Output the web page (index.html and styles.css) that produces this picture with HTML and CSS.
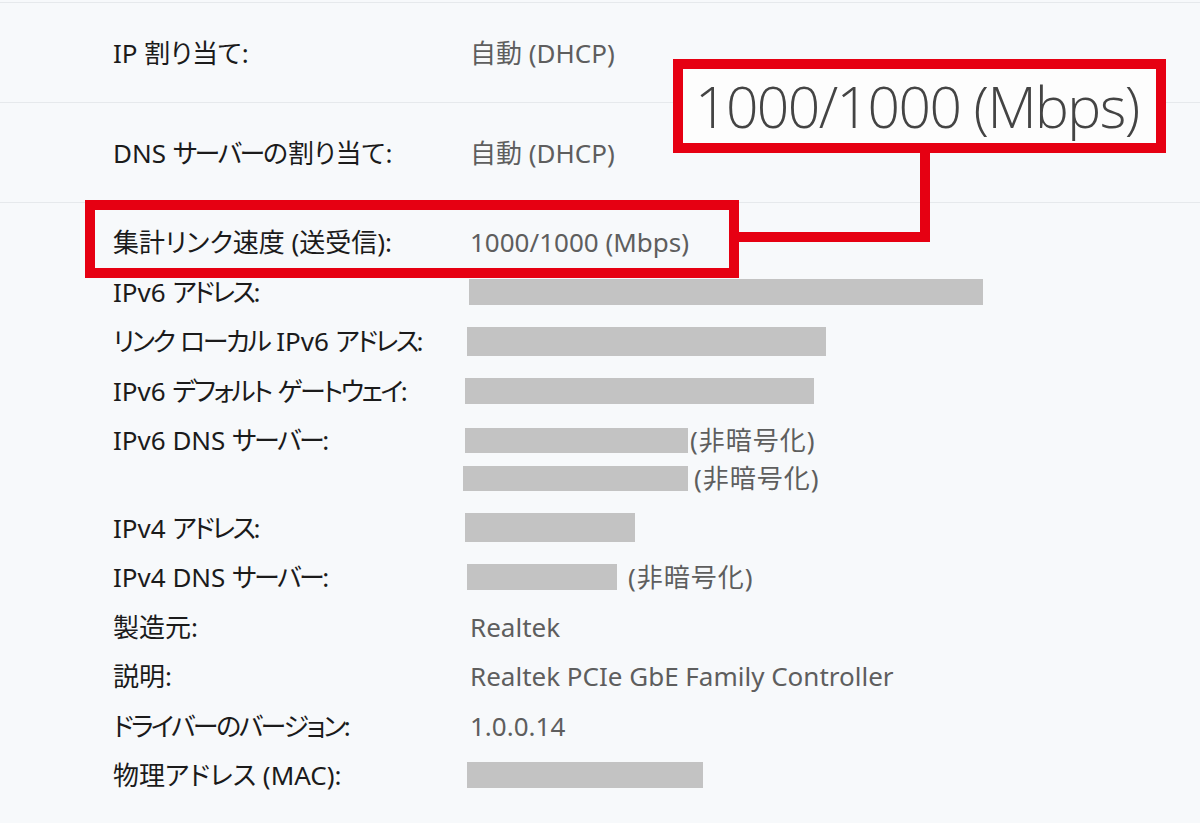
FILE: index.html
```html
<!DOCTYPE html>
<html lang="ja">
<head>
<meta charset="utf-8">
<title>ネットワークのプロパティ</title>
<link rel="stylesheet" href="styles.css">
</head>
<body>
<div class="page">
  <section class="top">
    <div class="top-row">
      <div class="label">IP 割り当て:</div>
      <div class="value">自動 (DHCP)</div>
    </div>
    <div class="top-row">
      <div class="label">DNS <span class="kana">サーバー</span>の割り当て:</div>
      <div class="value">自動 (DHCP)</div>
    </div>
  </section>

  <section class="props">
    <div class="label">集計リンク速度 (送受信):</div>
    <div class="value">1000/1000 (Mbps)</div>

    <div class="label">IPv6 <span class="kana">アドレス</span>:</div>
    <div class="value"><span class="bar" style="width:514px;margin-left:-1px"></span></div>

    <div class="label"><span class="kana">リンク</span> <span class="kana">ローカル</span> IPv6 <span class="kana">アドレス</span>:</div>
    <div class="value"><span class="bar bar-tall" style="width:359px;margin-left:-3px"></span></div>

    <div class="label">IPv6 <span class="kana">デフォルト</span> <span class="kana">ゲートウェイ</span>:</div>
    <div class="value"><span class="bar" style="width:349px;margin-left:-5px"></span></div>

    <div class="label">IPv6 DNS <span class="kana">サーバー</span>:</div>
    <div class="value multi">
      <div class="line"><span class="bar bar-short" style="width:223px;margin-left:-5px"></span><span class="note tight">(非暗号化)</span></div>
      <div class="line"><span class="bar bar-short" style="width:225px;margin-left:-7px"></span><span class="note">(非暗号化)</span></div>
    </div>

    <div class="label">IPv4 <span class="kana">アドレス</span>:</div>
    <div class="value"><span class="bar bar-tall" style="width:170px;margin-left:-5px"></span></div>

    <div class="label">IPv4 DNS <span class="kana">サーバー</span>:</div>
    <div class="value"><span class="bar" style="width:150px;margin-left:-3px"></span><span class="note wide">(非暗号化)</span></div>

    <div class="label">製造元:</div>
    <div class="value">Realtek</div>

    <div class="label">説明:</div>
    <div class="value">Realtek PCIe GbE Family Controller</div>

    <div class="label"><span class="kana">ドライバーのバージョン</span>:</div>
    <div class="value">1.0.0.14</div>

    <div class="label">物理アドレス (MAC):</div>
    <div class="value"><span class="bar" style="width:236px;margin-left:-3px"></span></div>
  </section>

  <div class="callout-small"></div>
  <div class="connector-h"></div>
  <div class="connector-v"></div>
  <div class="callout-big"><span class="big-text">1000/1000 (Mbps)</span></div>
</div>
</body>
</html>
```

FILE: styles.css
```css
html, body {
  margin: 0;
  padding: 0;
  background: #f7f9fb;
}

.page {
  position: relative;
  width: 1200px;
  height: 823px;
  overflow: hidden;
  padding-top: 2px;
  box-sizing: border-box;
  font-family: "Noto Sans", "Noto Sans CJK JP", sans-serif;
  font-feature-settings: "palt";
  font-size: 26px;
  color: #1b1b1b;
}

.top {
  border-top: 1px solid #e6e9ec;
}

.top-row {
  display: grid;
  grid-template-columns: 357px 1fr;
  align-items: center;
  height: 99px;
  padding-left: 113px;
  border-bottom: 1px solid #e6e9ec;
}

.label {
  color: #1b1b1b;
  line-height: 38px;
  white-space: nowrap;
}

.kana {
  letter-spacing: -2.5px;
}

.value {
  color: #5e5e5e;
  line-height: 38px;
  white-space: nowrap;
  display: flex;
  align-items: center;
}

.props {
  display: grid;
  grid-template-columns: 357px 1fr;
  row-gap: 11.5px;
  padding: 20px 0 0 113px;
}

.props .label {
  align-self: start;
}

.value.multi {
  flex-direction: column;
  align-items: flex-start;
}

.line {
  display: flex;
  align-items: center;
  height: 38px;
}

.bar {
  display: inline-block;
  height: 26px;
  background: #c3c3c3;
}

.bar-tall {
  height: 29px;
}

.bar-short {
  height: 25px;
}

.note {
  margin-left: 6px;
  color: #5e5e5e;
  letter-spacing: 1px;
}

.note.tight {
  margin-left: 2px;
}

.note.wide {
  margin-left: 11px;
}

/* annotation overlay */
.callout-small {
  position: absolute;
  left: 85px;
  top: 200px;
  width: 654px;
  height: 78px;
  box-sizing: border-box;
  border: 10px solid #e60012;
}

.connector-h {
  position: absolute;
  left: 739px;
  top: 232px;
  width: 191px;
  height: 10px;
  background: #e60012;
}

.connector-v {
  position: absolute;
  left: 920px;
  top: 150px;
  width: 10px;
  height: 92px;
  background: #e60012;
}

.callout-big {
  position: absolute;
  left: 673px;
  top: 59px;
  width: 493px;
  height: 94px;
  box-sizing: border-box;
  border: 10px solid #e60012;
  background: #fdfdfd;
  display: flex;
  align-items: center;
  padding-left: 12px;
}

.big-text {
  font-family: "Open Sans", "Noto Sans", sans-serif;
  font-weight: 300;
  font-size: 57px;
  line-height: 1;
  color: #444444;
  letter-spacing: -1.6px;
  white-space: nowrap;
}
```
